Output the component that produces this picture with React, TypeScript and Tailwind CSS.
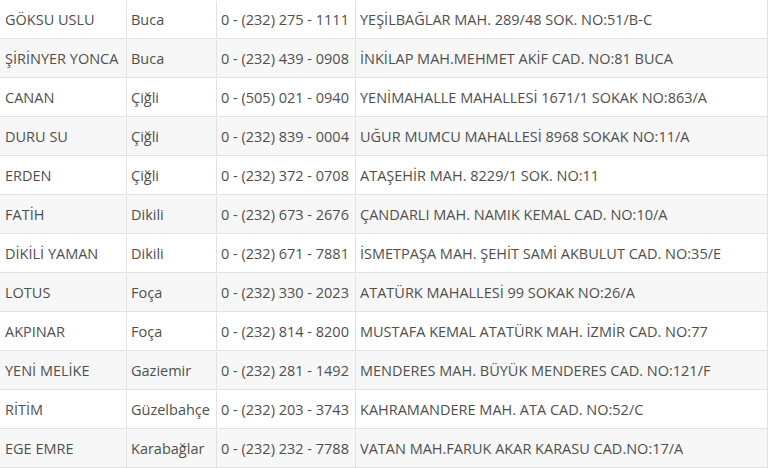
const rows: [string, string, string, string][] = [
  ['GÖKSU USLU', 'Buca', '0 - (232) 275 - 1111', 'YEŞİLBAĞLAR MAH. 289/48 SOK. NO:51/B-C'],
  ['ŞİRİNYER YONCA', 'Buca', '0 - (232) 439 - 0908', 'İNKİLAP MAH.MEHMET AKİF CAD. NO:81 BUCA'],
  ['CANAN', 'Çiğli', '0 - (505) 021 - 0940', 'YENİMAHALLE MAHALLESİ 1671/1 SOKAK NO:863/A'],
  ['DURU SU', 'Çiğli', '0 - (232) 839 - 0004', 'UĞUR MUMCU MAHALLESİ 8968 SOKAK NO:11/A'],
  ['ERDEN', 'Çiğli', '0 - (232) 372 - 0708', 'ATAŞEHİR MAH. 8229/1 SOK. NO:11'],
  ['FATİH', 'Dikili', '0 - (232) 673 - 2676', 'ÇANDARLI MAH. NAMIK KEMAL CAD. NO:10/A'],
  ['DİKİLİ YAMAN', 'Dikili', '0 - (232) 671 - 7881', 'İSMETPAŞA MAH. ŞEHİT SAMİ AKBULUT CAD. NO:35/E'],
  ['LOTUS', 'Foça', '0 - (232) 330 - 2023', 'ATATÜRK MAHALLESİ 99 SOKAK NO:26/A'],
  ['AKPINAR', 'Foça', '0 - (232) 814 - 8200', 'MUSTAFA KEMAL ATATÜRK MAH. İZMİR CAD. NO:77'],
  ['YENİ MELİKE', 'Gaziemir', '0 - (232) 281 - 1492', 'MENDERES MAH. BÜYÜK MENDERES CAD. NO:121/F'],
  ['RİTİM', 'Güzelbahçe', '0 - (232) 203 - 3743', 'KAHRAMANDERE MAH. ATA CAD. NO:52/C'],
  ['EGE EMRE', 'Karabağlar', '0 - (232) 232 - 7788', 'VATAN MAH.FARUK AKAR KARASU CAD.NO:17/A'],
];

export default function App() {
  return (
    <div className="w-[770px] h-[468px] overflow-hidden bg-white font-['Open_Sans',sans-serif] text-[14.5px] text-[#4f4f4f]">
      <div className="w-[768px] border-r border-[#e2e2e2]">
        {rows.map((r, i) => (
          <div
            key={r[0]}
            className={`flex h-[39px] pt-[1px] border-b border-[#e2e2e2] ${i % 2 === 1 ? 'bg-[#f7f7f7]' : 'bg-white'}`}
          >
            <div className="w-[127px] shrink-0 flex items-center pl-[5px] border-r border-[#e2e2e2] whitespace-nowrap">
              {r[0]}
            </div>
            <div className="w-[90px] shrink-0 flex items-center pl-[4px] border-r border-[#e2e2e2] whitespace-nowrap">
              {r[1]}
            </div>
            <div className="w-[139px] shrink-0 flex items-center pl-[4px] border-r border-[#e2e2e2] whitespace-nowrap">
              {r[2]}
            </div>
            <div className="flex-1 flex items-center pl-[4px] whitespace-nowrap">{r[3]}</div>
          </div>
        ))}
      </div>
    </div>
  );
}
